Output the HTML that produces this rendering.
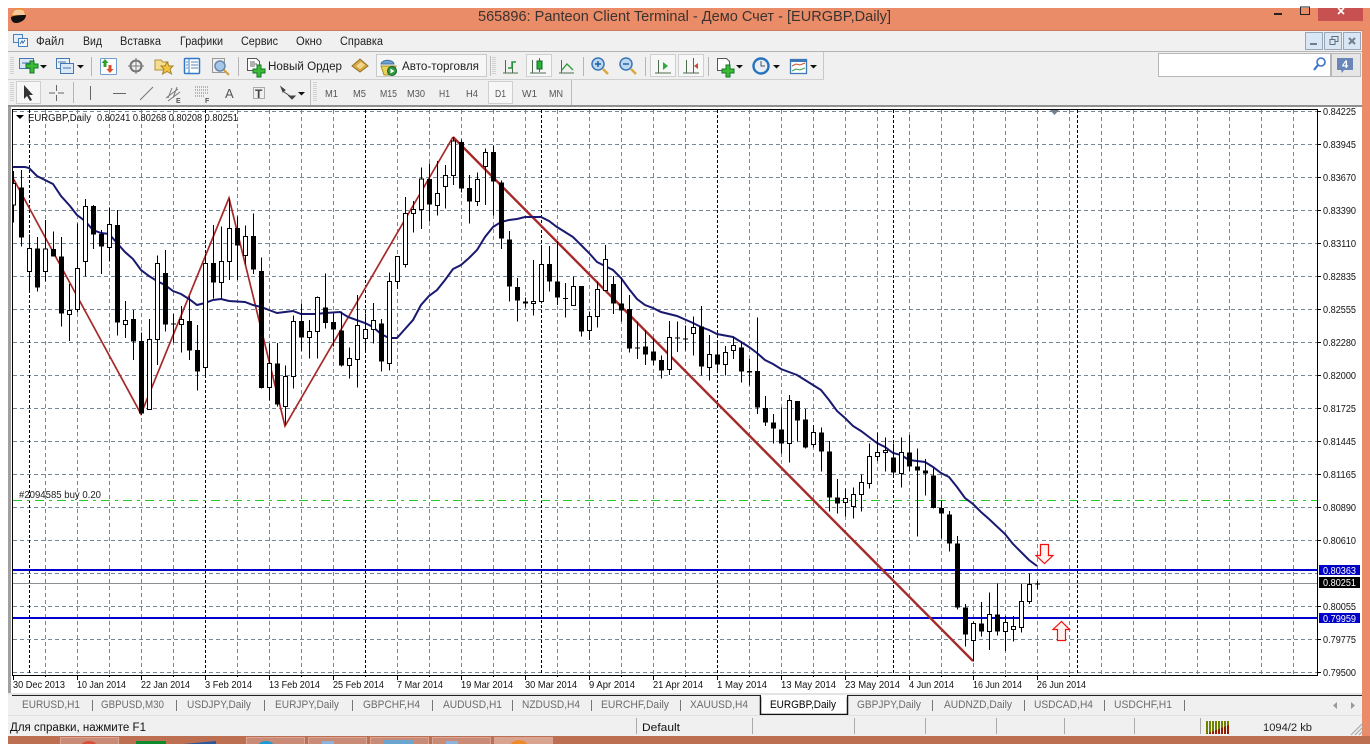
<!DOCTYPE html>
<html><head><meta charset="utf-8"><title>Panteon Client Terminal</title>
<style>
html,body{margin:0;padding:0;background:#fff;width:1370px;height:744px;overflow:hidden}
svg{display:block;font-family:"Liberation Sans","Noto Sans CJK SC",sans-serif}
.m{font-size:11.5px;fill:#222}
.t{font-size:10px;fill:#555}
.p{font-size:10px;fill:#111}
.d{font-size:10px;fill:#111}
.b{font-size:11px;fill:#6c6c6c}
</style></head><body>
<svg width="1370" height="744" viewBox="0 0 1370 744" xmlns="http://www.w3.org/2000/svg">
<defs><clipPath id="cl"><rect x="13" y="110" width="1304" height="565"/></clipPath></defs>
<rect x="8" y="8" width="1362" height="736" fill="#ea8c67"/>
<rect x="8" y="30" width="1355" height="1" fill="#c97a5c"/>
<rect x="8" y="31" width="1354" height="705" fill="#f0f0f0"/>
<!-- title -->
<path d="M11 18c0-7 5-10 8-10s7 2 7 7z" fill="#ef8a2a"/><path d="M14 11c2-2 7-2 10 0l1 4H12z" fill="#f4c9a0"/><path d="M11 17c4-2 11-2 15-2 0 5-6 8-10 8-3 0-5-2-5-6z" fill="#111"/>
<text x="478" y="21" font-size="15" fill="#3b3330" textLength="413" lengthAdjust="spacingAndGlyphs">565896: Panteon Client Terminal - Демо Счет - [EURGBP,Daily]</text>
<rect x="1274" y="13" width="8" height="2" fill="#222"/>
<rect x="1300.5" y="7" width="9" height="7.5" fill="none" stroke="#222"/>
<rect x="1318" y="8" width="45" height="13" fill="#c75050"/>
<path d="M1338 8l3 3 3-3M1338 14l3-3 3 3" stroke="#fff" stroke-width="1.6" fill="none"/>
<!-- menu -->
<rect x="13.5" y="34.5" width="9" height="8" fill="#e4eefa" stroke="#4a7fc0"/><rect x="18.5" y="38.5" width="9" height="8" fill="#f4f8fd" stroke="#4a7fc0"/><path d="M20 44l2-3 1 2 2-3" stroke="#3a6db0" fill="none"/>
<text class="m" x="36" y="45" textLength="28" lengthAdjust="spacingAndGlyphs">Файл</text>
<text class="m" x="83" y="45" textLength="19" lengthAdjust="spacingAndGlyphs">Вид</text>
<text class="m" x="120" y="45" textLength="41" lengthAdjust="spacingAndGlyphs">Вставка</text>
<text class="m" x="180" y="45" textLength="43" lengthAdjust="spacingAndGlyphs">Графики</text>
<text class="m" x="241" y="45" textLength="37" lengthAdjust="spacingAndGlyphs">Сервис</text>
<text class="m" x="296" y="45" textLength="26" lengthAdjust="spacingAndGlyphs">Окно</text>
<text class="m" x="340" y="45" textLength="43" lengthAdjust="spacingAndGlyphs">Справка</text>
<g fill="#d9e6f3" stroke="#96a6b6"><rect x="1305.5" y="32.5" width="17" height="17"/><rect x="1324.5" y="32.5" width="17" height="17"/><rect x="1343.5" y="32.5" width="17" height="17"/></g>
<rect x="1310" y="43" width="7" height="2" fill="#6f7d8c"/>
<path d="M1330 39.500h5v5h-5zM1332 39v-2.500h6v5h-3" fill="none" stroke="#5f6d7c"/>
<path d="M1349 38l6 6M1355 38l-6 6" stroke="#6f7d8c" stroke-width="2"/>
<rect x="8" y="51" width="1354" height="1" fill="#b4b4b4"/>
<!-- toolbar 1 -->
<path d="M823.500 52v27" stroke="#c8c8c8"/><rect x="8" y="79" width="816" height="1" fill="#cfcfcf"/>
<path d="M11 57v18M13 57v18" stroke="#b5b5b5" stroke-dasharray="1 1"/>
<g stroke-width="1">
<rect x="19.500" y="58.500" width="14" height="10" fill="#dbe8f6" stroke="#4677b0"/><path d="M22 63h8" stroke="#4677b0"/>
<path d="M27 63h4v-3h4v3h4v4h-4v5h-4v-5h-4z" transform="translate(-1 1)" fill="#3cbb35" stroke="#14762c"/>
<path d="M40 65h7l-3.500 3.500z" fill="#111"/>
<rect x="56.500" y="58.500" width="13" height="10" fill="#eaf2fb" stroke="#4677b0"/><rect x="60.500" y="63.500" width="13" height="10" fill="#dbe8f6" stroke="#4677b0"/><path d="M63 68h8M58 62h8" stroke="#4677b0"/>
<path d="M77 65h7l-3.500 3.500z" fill="#111"/>
<path d="M91.500 57v19" stroke="#b5b5b5"/>
<rect x="100.500" y="58.500" width="16" height="16" rx="1" fill="#fff" stroke="#6d9ccf"/><path d="M105 59l3.500 4h-2v4h-3v-4h-2z" fill="#30a030"/><path d="M110 73l-3.500-4h2v-4h3v4h2z" fill="#dd4a2a"/>
<circle cx="136" cy="66" r="5.500" fill="none" stroke="#777" stroke-width="2"/><path d="M136 58v16M128 66h16" stroke="#777"/>
<path d="M155 60h6l2 2h5v8h-13z" fill="#f5dd8d" stroke="#b08f3a"/><path d="M167 62l2 4h4l-3 3 1.500 5-4.500-2.500-4.500 2.500 1.500-5-3-3h4z" fill="#f2c63a" stroke="#a5812a"/>
<rect x="184.500" y="58.500" width="15" height="15" rx="1" fill="#fff" stroke="#2d78c8" stroke-width="1.500"/><path d="M189 59v14" stroke="#2d78c8"/><path d="M191 62h7M191 65h7M191 68h7M186 62h2M186 65h2M186 68h2" stroke="#5d85b5"/>
<rect x="212.500" y="58.500" width="12" height="14" fill="#eee" stroke="#999"/><circle cx="220" cy="66" r="5" fill="#a5c8ea" stroke="#6a88a8" stroke-width="1.500"/><path d="M224 70l5 5" stroke="#d5a03a" stroke-width="2"/>
<path d="M238.500 57v19" stroke="#b5b5b5"/>
<path d="M247.500 58.500h9l3 3v9h-12z" fill="#fff" stroke="#555"/><path d="M250 62h5M250 64h7M250 66h5" stroke="#666"/>
<path d="M253 69h4v-4h4v4h4v4h-4v4h-4v-4h-4z" fill="#3cbb35" stroke="#14762c"/>
<path d="M352 66l8-7 8 7-8 6z" fill="#d8a83f" stroke="#92702a"/><path d="M356 66l5-4 4 3-5 4z" fill="#efd690"/>
<rect x="376.500" y="54.500" width="110" height="22" fill="#f6f6f6" stroke="#c9c9c9"/>
<path d="M381 64c1-5 12-5 13 0z" fill="#6ea1d6" stroke="#46729f"/><path d="M381 66h15l-3 9h-9z" fill="#e9d15a" stroke="#a59026"/><circle cx="392" cy="71" r="4.500" fill="#2d9a3c" stroke="#14622a"/><path d="M390.500 68.500l4 2.500-4 2.500z" fill="#fff"/>
<rect x="490" y="56" width="1" height="20" fill="#bdbdbd"/>
<path d="M493 57v18M495 57v18" stroke="#b5b5b5" stroke-dasharray="1 1"/>
<path d="M505.500 60v13M503 73h15M512.500 63v10" stroke="#4c6b4e" fill="none"/><path d="M508 68h4v-6h4" stroke="#1e9a35" fill="none" stroke-width="1.500"/>
<rect x="526.500" y="54.500" width="25" height="22" fill="#f7f7f7" stroke="#cfcfcf"/><path d="M532.500 60v13M530 73h16M539.500 58v14" stroke="#4c6b4e" fill="none"/><rect x="537" y="61" width="5" height="8" fill="#25b33a" stroke="#0f6a24"/>
<path d="M561.500 60v13M559 73h15" stroke="#4c6b4e" fill="none"/><path d="M562 70l5-6 6 6" stroke="#2a9a3a" fill="none" stroke-width="1.300"/>
<path d="M583.500 57v19" stroke="#b5b5b5"/>
<circle cx="598" cy="64" r="6" fill="#bcd7f2" stroke="#3d75b5" stroke-width="1.500"/><path d="M595 64h6M598 61v6" stroke="#1f5aa0" stroke-width="1.400"/><path d="M603 69l5 5" stroke="#d9a83c" stroke-width="2.400"/>
<circle cx="626" cy="64" r="6" fill="#bcd7f2" stroke="#3d75b5" stroke-width="1.500"/><path d="M623 64h6" stroke="#1f5aa0" stroke-width="1.400"/><path d="M631 69l5 5" stroke="#d9a83c" stroke-width="2.400"/>
<path d="M645.500 57v19" stroke="#b5b5b5"/>
<rect x="650.500" y="54.500" width="25" height="22" fill="#f7f7f7" stroke="#cfcfcf"/><path d="M658.500 60v13M655 73h16" stroke="#4c6b4e" fill="none"/><path d="M663 62l5 4-5 4z" fill="#2ab03a"/>
<rect x="678.500" y="54.500" width="25" height="22" fill="#f7f7f7" stroke="#cfcfcf"/><path d="M686.500 60v13M683 73h16M693.500 58v15" stroke="#4c6b4e" fill="none"/><path d="M694 66l4-3v6z" fill="#c84a2a"/>
<path d="M708.500 57v19" stroke="#b5b5b5"/>
<path d="M717.500 58.500h9l3 3v9h-12z" fill="#fff" stroke="#555"/>
<path d="M722 69h4v-4h4v4h4v4h-4v4h-4v-4h-4z" fill="#3cbb35" stroke="#14762c"/>
<path d="M736 65h7l-3.500 3.500z" fill="#111"/>
<circle cx="761" cy="66" r="7.500" fill="#e8eef5" stroke="#2572bd" stroke-width="2.400"/><path d="M761 61v5h4" stroke="#555" fill="none"/>
<path d="M773 65h7l-3.500 3.500z" fill="#111"/>
<rect x="790.500" y="59.500" width="16" height="14" fill="#fff" stroke="#3f78b8" stroke-width="1.300"/><rect x="791" y="60" width="15" height="2" fill="#3f78b8"/><path d="M792 66l4-2 4 1 5-2" stroke="#c0552a" fill="none"/><path d="M792 71l4-2 4 1 5-2" stroke="#3aa04a" fill="none"/>
<path d="M810 65h7l-3.500 3.500z" fill="#111"/>
</g>
<text x="268" y="70" font-size="11.500" fill="#222" textLength="74" lengthAdjust="spacingAndGlyphs">Новый Ордер</text>
<text x="402" y="70" font-size="11.500" fill="#222" textLength="77" lengthAdjust="spacingAndGlyphs">Авто-торговля</text>
<!-- search -->
<rect x="1158.500" y="53.500" width="172" height="23" fill="#fff" stroke="#b7b7b7"/>
<circle cx="1321" cy="62" r="4" fill="#fff" stroke="#3c72c8" stroke-width="1.600"/><path d="M1318 65l-4 5" stroke="#3c72c8" stroke-width="2.200"/>
<rect x="1331.500" y="53.500" width="29" height="23" fill="#e6e6e6" stroke="#b7b7b7"/>
<path d="M1337 58h16v12h-9l-2 3-1-3h-4z" fill="#6a85b8"/><text x="1342" y="68" font-size="11" font-weight="bold" fill="#fff">4</text>
<!-- toolbar 2 -->
<path d="M11 82v19M13 82v19" stroke="#b5b5b5" stroke-dasharray="1 1"/>
<rect x="16.500" y="81.500" width="24" height="22" fill="#f7f7f7" stroke="#cfcfcf"/>
<path d="M24 85v14l3-3 3 5 2-1-3-5h4z" fill="#333"/>
<path d="M49 93h6M58 93h6M56.500 85v6M56.500 95v6" stroke="#666"/>
<path d="M73.500 82v21" stroke="#b5b5b5"/>
<path d="M90.500 86v14" stroke="#666"/><path d="M113 93.500h13" stroke="#666"/><path d="M140 100l13-13" stroke="#777"/>
<path d="M166 98l12-9M168 101l12-9M172 88l-4 10M177 87l-4 11" stroke="#777" fill="none"/><text x="176" y="103" font-size="7" font-weight="bold" fill="#555">E</text>
<path d="M195 87h13M195 90h13M195 93h13M195 96h10" stroke="#777" stroke-dasharray="1 1"/><text x="205" y="103" font-size="7" font-weight="bold" fill="#555">F</text>
<text x="225" y="98" font-size="13" fill="#555">A</text>
<rect x="253.500" y="87.500" width="11" height="11" fill="none" stroke="#666" stroke-dasharray="1 1"/><text x="255" y="98" font-size="12" font-weight="bold" fill="#444">T</text>
<path d="M281 87l4 3-2 2zM289 96h6l-3 3zM284 92l6 4" fill="#444" stroke="#444"/>
<path d="M298 92h7l-3.500 3.500z" fill="#111"/>
<path d="M310.500 80v25" stroke="#bdbdbd"/><path d="M314 82v19M316 82v19" stroke="#b5b5b5" stroke-dasharray="1 1"/>
<text class="t" x="325" y="97" textLength="13" lengthAdjust="spacingAndGlyphs">M1</text>
<text class="t" x="353" y="97" textLength="13" lengthAdjust="spacingAndGlyphs">M5</text>
<text class="t" x="380" y="97" textLength="17" lengthAdjust="spacingAndGlyphs">M15</text>
<text class="t" x="407" y="97" textLength="18" lengthAdjust="spacingAndGlyphs">M30</text>
<text class="t" x="439" y="97" textLength="11" lengthAdjust="spacingAndGlyphs">H1</text>
<text class="t" x="466" y="97" textLength="12" lengthAdjust="spacingAndGlyphs">H4</text>
<rect x="488.500" y="81.500" width="24" height="22" fill="#f7f7f7" stroke="#cfcfcf"/>
<text class="t" x="495" y="97" textLength="11" lengthAdjust="spacingAndGlyphs">D1</text>
<text class="t" x="522" y="97" textLength="15" lengthAdjust="spacingAndGlyphs">W1</text>
<text class="t" x="549" y="97" textLength="14" lengthAdjust="spacingAndGlyphs">MN</text>
<path d="M571.500 80v25" stroke="#bdbdbd"/>
<rect x="8" y="105" width="1354" height="2" fill="#8f8f8f"/>
<!-- chart window -->
<rect x="8" y="107" width="3" height="586" fill="#a0a0a0"/>
<rect x="11" y="107" width="1351" height="586" fill="#fff"/>
<g shape-rendering="crispEdges">
<g clip-path="url(#cl)">
<path fill="none" stroke="#778899" stroke-dasharray="4 3" d="M13 111.500H1317M13 144.500H1317M13 177.500H1317M13 210.500H1317M13 243.500H1317M13 276.500H1317M13 309.500H1317M13 342.500H1317M13 375.500H1317M13 408.500H1317M13 441.500H1317M13 474.500H1317M13 507.500H1317M13 540.500H1317M13 573.500H1317M13 606.500H1317M13 639.500H1317M13 672.500H1317M45.500 110V675M77.500 110V675M109.500 110V675M141.500 110V675M173.500 110V675M237.500 110V675M269.500 110V675M301.500 110V675M333.500 110V675M397.500 110V675M429.500 110V675M461.500 110V675M493.500 110V675M525.500 110V675M557.500 110V675M589.500 110V675M621.500 110V675M653.500 110V675M685.500 110V675M749.500 110V675M781.500 110V675M813.500 110V675M845.500 110V675M877.500 110V675M909.500 110V675M941.500 110V675M973.500 110V675M1005.500 110V675M1037.500 110V675M1069.500 110V675M1101.500 110V675M1133.500 110V675M1165.500 110V675M1197.500 110V675M1229.500 110V675M1261.500 110V675M1293.500 110V675"/>
<path fill="none" stroke="#000" stroke-dasharray="3 2" d="M29.500 110V675M205.500 110V675M365.500 110V675M541.500 110V675M717.500 110V675M893.500 110V675M1077.500 110V675"/>
<path d="M13 500.500H1317" stroke="#22cc22" stroke-dasharray="9 5 3 5" fill="none"/>
<path d="M13 583.500H1317" stroke="#8a8f94" fill="none"/>
<rect x="13" y="569" width="1304" height="2" fill="#0000c8"/>
<rect x="13" y="617" width="1304" height="2" fill="#0000c8"/>
</g>
</g>
<g clip-path="url(#cl)">
<polyline fill="none" stroke="#a52a2a" stroke-width="1.700" points="13,178 141,414 229,198 285,426 453,137"/>
<polyline fill="none" stroke="#a52a2a" stroke-width="2.400" points="453,137 973,661"/>
<polyline fill="none" stroke="#191970" stroke-width="2" points="13,167 25,167 29,168 37,176 53,184 61,196 70,206 77,215 85,221 93,230 101,233 109,234 117,243 125,252 133,259 141,270 149,276 157,281 165,285 173,291 181,294 189,299 197,305 205,303 213,300 221,299 229,301 245,302 253,305 261,307 269,310 277,313 285,312 293,311 301,314 317,314 325,313 340,312 348,317 365,323 373,327 381,334 389,338 397,338 405,329 413,320 421,305 429,296 437,290 445,280 453,269 461,265 469,258 477,250 485,237 493,227 501,222 509,220 517,219 525,217 541,217 549,221 557,227 565,232 573,237 581,245 589,253 597,262 605,266 613,270 621,278 629,289 637,299 645,305 653,308 661,312 677,316 693,323 701,327 709,330 717,334 733,337 741,342 749,347 757,353 765,360 773,364 781,369 789,372 797,375 805,380 813,385 821,390 829,400 837,411 845,418 853,426 861,431 869,437 877,443 885,447 893,453 901,455 909,460 925,462 933,467 941,473 949,477 957,487 965,498 973,504 981,512 989,519 1005,534 1013,544 1021,552 1029,560 1037,566"/>
<g shape-rendering="crispEdges">
<g transform="translate(0 105) scale(1 .33333)">
<path fill="none" stroke="#000" vector-effect="non-scaling-stroke" d="M13.500 198V352M21.500 195V425M29.500 388V563M37.500 396V560M45.500 345V530M53.500 380V455M61.500 396V665M69.500 537V708M77.500 355V623M85.500 282V515M93.500 300V432M101.500 375V507M109.500 308V470M117.500 315V692M125.500 588V699M133.500 615V765M141.500 683V930M149.500 642V913M157.500 452V780M165.500 435V680M173.500 627V712M181.500 603V743M189.500 575V765M197.500 660V857M205.500 445V813M213.500 360V580M221.500 365V580M229.500 280V525M237.500 335V525M245.500 362V478M253.500 325V507M261.500 457V851M269.500 715V887M277.500 714V905M285.500 782V960M293.500 632V850M301.500 595V738M309.500 645V760M317.500 574V760M325.500 505V670M333.500 625V725"/>
<path fill="#000" d="M19 247h5V397h-5zM35 430h5V548h-5zM51 432h5V455h-5zM59 454h5V626h-5zM91 303h5V389h-5zM99 387h5V425h-5zM115 360h5V653h-5zM131 642h5V710h-5zM139 708h5V925h-5zM163 504h5V659h-5zM171 655h5V659h-5zM187 648h5V737h-5zM195 735h5V800h-5zM211 474h5V533h-5zM235 369h5V421h-5zM251 393h5V494h-5zM259 498h5V849h-5zM275 775h5V899h-5zM299 648h5V698h-5zM323 607h5V654h-5zM331 651h5V674h-5z"/>
<path fill="#fff" stroke="#000" vector-effect="non-scaling-stroke" d="M11.500 235h4V300h-4zM27.500 430h4V499h-4zM43.500 432h4V499h-4zM67.500 616h4V628h-4zM75.500 490h4V613h-4zM83.500 304h4V469h-4zM107.500 358h4V427h-4zM123.500 646h4V659h-4zM147.500 703h4V913h-4zM155.500 475h4V703h-4zM179.500 643h4V658h-4zM203.500 475h4V787h-4zM219.500 469h4V532h-4zM227.500 370h4V469h-4zM243.500 394h4V451h-4zM267.500 775h4V847h-4zM283.500 814h4V904h-4zM291.500 649h4V814h-4zM307.500 679h4V697h-4zM315.500 577h4V679h-4z"/>
<path fill="none" stroke="#000" vector-effect="non-scaling-stroke" d="M341.500 620V785M349.500 728V820M357.500 570V848M365.500 625V740M373.500 594V716M381.500 642V800M389.500 502V797M397.500 454V552M405.500 276V488M413.500 288V383M421.500 188V372M429.500 176V350M437.500 168V332M445.500 180V311M453.500 96V240M461.500 103V263M469.500 210V356M477.500 202V303M485.500 130V300M493.500 122V332M501.500 226V432M509.500 378V590M517.500 519V650M525.500 578V607M533.500 465V632M541.500 427V595M549.500 423V560M557.500 408V600M565.500 534V638M573.500 515V603M581.500 543V695M589.500 620V705M597.500 530V668M605.500 420V558M613.500 513V627M621.500 517V650M629.500 570V743M637.500 650V762M645.500 675V780M653.500 700V780"/>
<path fill="#000" d="M339 676h5V782h-5zM379 655h5V770h-5zM427 222h5V299h-5zM459 111h5V251h-5zM467 249h5V290h-5zM491 141h5V230h-5zM499 232h5V401h-5zM507 403h5V545h-5zM515 546h5V587h-5zM523 589h5V596h-5zM547 477h5V530h-5zM555 529h5V578h-5zM563 579h5V582h-5zM579 543h5V680h-5zM611 537h5V596h-5zM619 595h5V617h-5zM627 612h5V731h-5zM635 727h5V731h-5zM643 724h5V749h-5zM651 739h5V767h-5z"/>
<path fill="#fff" stroke="#000" vector-effect="non-scaling-stroke" d="M347.500 760h4V781h-4zM355.500 661h4V763h-4zM363.500 673h4V700h-4zM371.500 646h4V673h-4zM387.500 529h4V775h-4zM395.500 454h4V529h-4zM403.500 325h4V479h-4zM411.500 314h4V325h-4zM419.500 222h4V313h-4zM435.500 265h4V301h-4zM443.500 211h4V244h-4zM451.500 108h4V212h-4zM475.500 223h4V289h-4zM483.500 142h4V185h-4zM531.500 589h4V595h-4zM539.500 478h4V590h-4zM571.500 544h4V601h-4zM587.500 634h4V676h-4zM595.500 553h4V634h-4zM603.500 463h4V556h-4z"/>
</g>
<g transform="translate(0 290) scale(1 .33333)">
<path fill="none" stroke="#000" vector-effect="non-scaling-stroke" d="M661.500 197V266M669.500 93V255M677.500 95V186M685.500 107V181M693.500 80V197M701.500 48V257M709.500 135V272M717.500 157V248M725.500 168V257M733.500 143V207M741.500 155V278M749.500 207V287M757.500 82V372M765.500 318V408M773.500 372V461M781.500 352V491M789.500 315V518M797.500 333V455M805.500 357V475M813.500 405V472M821.500 412V545M829.500 453V665M837.500 567V670M845.500 595V680M853.500 593V686M861.500 553V665M869.500 460V596M877.500 427V513M885.500 442V545M893.500 460V562M901.500 442V593M909.500 435V545M917.500 475V740M925.500 507V617M933.500 535V655M941.500 632V745"/>
<path fill="#000" d="M659 210h5V242h-5zM675 142h5V146h-5zM683 145h5V149h-5zM699 110h5V230h-5zM715 193h5V224h-5zM739 172h5V245h-5zM747 243h5V247h-5zM755 243h5V353h-5zM763 354h5V398h-5zM771 397h5V416h-5zM779 418h5V461h-5zM795 333h5V392h-5zM803 388h5V473h-5zM819 427h5V485h-5zM827 484h5V622h-5zM835 622h5V640h-5zM891 502h5V548h-5zM907 488h5V530h-5zM915 529h5V542h-5zM923 541h5V551h-5zM931 556h5V654h-5zM939 654h5V671h-5z"/>
<path fill="#fff" stroke="#000" vector-effect="non-scaling-stroke" d="M667.500 142h4V238h-4zM691.500 112h4V131h-4zM707.500 193h4V233h-4zM723.500 187h4V224h-4zM731.500 166h4V181h-4zM787.500 331h4V460h-4zM811.500 427h4V463h-4zM843.500 625h4V637h-4zM851.500 614h4V649h-4zM859.500 577h4V613h-4zM867.500 499h4V580h-4zM875.500 488h4V499h-4zM883.500 482h4V487h-4zM899.500 488h4V550h-4z"/>
</g>
<g transform="translate(0 480) scale(1 .33333)">
<path fill="none" stroke="#000" vector-effect="non-scaling-stroke" d="M949.500 93V215M957.500 168V388M965.500 372V500M973.500 425V545M981.500 366V470M989.500 337V510M997.500 310V466M1005.500 408V513M1013.500 408V485M1021.500 312V458M1029.500 280V372M1037.500 303V328"/>
<path fill="#000" d="M947 103h5V190h-5zM955 190h5V383h-5zM963 382h5V464h-5zM979 430h5V455h-5zM995 403h5V455h-5zM1035 310h5V313h-5z"/>
<path fill="#fff" stroke="#000" vector-effect="non-scaling-stroke" d="M971.500 430h4V481h-4zM987.500 404h4V454h-4zM1003.500 428h4V454h-4zM1011.500 440h4V448h-4zM1019.500 365h4V442h-4zM1027.500 313h4V364h-4z"/>
</g>
</g>
</g>
<!-- arrows -->
<path d="M1040.500 544.500h8v11h4.500l-8.500 8-8.500-8h4.500z" fill="#fff4f0" stroke="#f01010" stroke-width="1.200"/>
<path d="M1057.500 640.500h8v-11h4l-8-8-8.500 8h4.500z" fill="#fff4f0" stroke="#f01010" stroke-width="1.200"/>
<path d="M1050 110h9l-4.500 5z" fill="#6f7f8f"/>
<!-- frame -->
<g shape-rendering="crispEdges" fill="none" stroke="#000">
<path d="M12.500 109.500H1317.500V675.500H12.500Z"/>
<path d="M1317 111.500h4M1317 144.500h4M1317 177.500h4M1317 210.500h4M1317 243.500h4M1317 276.500h4M1317 309.500h4M1317 342.500h4M1317 375.500h4M1317 408.500h4M1317 441.500h4M1317 474.500h4M1317 507.500h4M1317 540.500h4M1317 606.500h4M1317 639.500h4M1317 672.500h4"/>
<path d="M13.500 675v5M77.500 675v5M141.500 675v5M205.500 675v5M269.500 675v5M333.500 675v5M397.500 675v5M461.500 675v5M525.500 675v5M589.500 675v5M653.500 675v5M717.500 675v5M781.500 675v5M845.500 675v5M909.500 675v5M973.500 675v5M1037.500 675v5"/>
<path d="M45.500 675v2M109.500 675v2M173.500 675v2M237.500 675v2M301.500 675v2M365.500 675v2M429.500 675v2M493.500 675v2M557.500 675v2M621.500 675v2M685.500 675v2M749.500 675v2M813.500 675v2M877.500 675v2M941.500 675v2M1005.500 675v2M1069.500 675v2"/>
</g>
<!-- header -->
<path d="M16 115h8l-4 4z" fill="#000"/>
<text x="28" y="121" font-size="10" fill="#111" textLength="63" lengthAdjust="spacingAndGlyphs">EURGBP,Daily</text>
<text x="97" y="121" font-size="10" fill="#111" textLength="141" lengthAdjust="spacingAndGlyphs">0.80241 0.80268 0.80208 0.80251</text>
<text x="19" y="498" font-size="10" fill="#222" textLength="82" lengthAdjust="spacingAndGlyphs">#2094585 buy 0.20</text>
<!-- prices -->
<g class="p">
<text class="p" x="1323" y="115" textLength="33" lengthAdjust="spacingAndGlyphs">0.84225</text>
<text class="p" x="1323" y="148" textLength="33" lengthAdjust="spacingAndGlyphs">0.83945</text>
<text class="p" x="1323" y="181" textLength="33" lengthAdjust="spacingAndGlyphs">0.83670</text>
<text class="p" x="1323" y="214" textLength="33" lengthAdjust="spacingAndGlyphs">0.83390</text>
<text class="p" x="1323" y="247" textLength="33" lengthAdjust="spacingAndGlyphs">0.83110</text>
<text class="p" x="1323" y="280" textLength="33" lengthAdjust="spacingAndGlyphs">0.82835</text>
<text class="p" x="1323" y="313" textLength="33" lengthAdjust="spacingAndGlyphs">0.82555</text>
<text class="p" x="1323" y="346" textLength="33" lengthAdjust="spacingAndGlyphs">0.82280</text>
<text class="p" x="1323" y="379" textLength="33" lengthAdjust="spacingAndGlyphs">0.82000</text>
<text class="p" x="1323" y="412" textLength="33" lengthAdjust="spacingAndGlyphs">0.81725</text>
<text class="p" x="1323" y="445" textLength="33" lengthAdjust="spacingAndGlyphs">0.81445</text>
<text class="p" x="1323" y="478" textLength="33" lengthAdjust="spacingAndGlyphs">0.81165</text>
<text class="p" x="1323" y="511" textLength="33" lengthAdjust="spacingAndGlyphs">0.80890</text>
<text class="p" x="1323" y="544" textLength="33" lengthAdjust="spacingAndGlyphs">0.80610</text>
<text class="p" x="1323" y="610" textLength="33" lengthAdjust="spacingAndGlyphs">0.80055</text>
<text class="p" x="1323" y="643" textLength="33" lengthAdjust="spacingAndGlyphs">0.79775</text>
<text class="p" x="1323" y="676" textLength="33" lengthAdjust="spacingAndGlyphs">0.79500</text>
</g>
<rect x="1319" y="565" width="41" height="10" fill="#0000c8"/>
<rect x="1319" y="577" width="41" height="11" fill="#000"/>
<rect x="1319" y="613" width="41" height="10" fill="#0000c8"/>
<text x="1323" y="574" font-size="10" fill="#fff" textLength="33" lengthAdjust="spacingAndGlyphs">0.80363</text>
<text x="1323" y="586" font-size="10" fill="#fff" textLength="33" lengthAdjust="spacingAndGlyphs">0.80251</text>
<text x="1323" y="622" font-size="10" fill="#fff" textLength="33" lengthAdjust="spacingAndGlyphs">0.79959</text>
<!-- dates -->
<text class="d" x="13" y="688" textLength="52" lengthAdjust="spacingAndGlyphs">30 Dec 2013</text>
<text class="d" x="77" y="688" textLength="49" lengthAdjust="spacingAndGlyphs">10 Jan 2014</text>
<text class="d" x="141" y="688" textLength="49" lengthAdjust="spacingAndGlyphs">22 Jan 2014</text>
<text class="d" x="205" y="688" textLength="47" lengthAdjust="spacingAndGlyphs">3 Feb 2014</text>
<text class="d" x="269" y="688" textLength="51" lengthAdjust="spacingAndGlyphs">13 Feb 2014</text>
<text class="d" x="333" y="688" textLength="51" lengthAdjust="spacingAndGlyphs">25 Feb 2014</text>
<text class="d" x="397" y="688" textLength="46" lengthAdjust="spacingAndGlyphs">7 Mar 2014</text>
<text class="d" x="461" y="688" textLength="52" lengthAdjust="spacingAndGlyphs">19 Mar 2014</text>
<text class="d" x="525" y="688" textLength="52" lengthAdjust="spacingAndGlyphs">30 Mar 2014</text>
<text class="d" x="589" y="688" textLength="46" lengthAdjust="spacingAndGlyphs">9 Apr 2014</text>
<text class="d" x="653" y="688" textLength="50" lengthAdjust="spacingAndGlyphs">21 Apr 2014</text>
<text class="d" x="717" y="688" textLength="50" lengthAdjust="spacingAndGlyphs">1 May 2014</text>
<text class="d" x="781" y="688" textLength="55" lengthAdjust="spacingAndGlyphs">13 May 2014</text>
<text class="d" x="845" y="688" textLength="55" lengthAdjust="spacingAndGlyphs">23 May 2014</text>
<text class="d" x="909" y="688" textLength="45" lengthAdjust="spacingAndGlyphs">4 Jun 2014</text>
<text class="d" x="973" y="688" textLength="49" lengthAdjust="spacingAndGlyphs">16 Jun 2014</text>
<text class="d" x="1037" y="688" textLength="49" lengthAdjust="spacingAndGlyphs">26 Jun 2014</text>
<!-- tabs -->
<rect x="8" y="693" width="1354" height="2" fill="#e4e4e4"/>
<rect x="12" y="695" width="1350" height="1" fill="#222"/>
<path d="M92.500 700v11M176.500 700v11M264.500 700v11M352.500 700v11M432.500 700v11M512.500 700v11M591.500 700v11M680.500 700v11M932.500 700v11M1024.500 700v11M1104.500 700v11M1184.500 700v11" stroke="#777"/>
<path d="M760.500 695.500v19h87v-19" fill="#fff" stroke="#111" stroke-width="1.500"/><rect x="761" y="695" width="86" height="2" fill="#fff"/>
<text class="b" x="22" y="708" textLength="58" lengthAdjust="spacingAndGlyphs">EURUSD,H1</text>
<text class="b" x="101" y="708" textLength="63" lengthAdjust="spacingAndGlyphs">GBPUSD,M30</text>
<text class="b" x="187" y="708" textLength="64" lengthAdjust="spacingAndGlyphs">USDJPY,Daily</text>
<text class="b" x="275" y="708" textLength="64" lengthAdjust="spacingAndGlyphs">EURJPY,Daily</text>
<text class="b" x="363" y="708" textLength="57" lengthAdjust="spacingAndGlyphs">GBPCHF,H4</text>
<text class="b" x="443" y="708" textLength="59" lengthAdjust="spacingAndGlyphs">AUDUSD,H1</text>
<text class="b" x="522" y="708" textLength="58" lengthAdjust="spacingAndGlyphs">NZDUSD,H4</text>
<text class="b" x="601" y="708" textLength="68" lengthAdjust="spacingAndGlyphs">EURCHF,Daily</text>
<text class="b" x="690" y="708" textLength="58" lengthAdjust="spacingAndGlyphs">XAUUSD,H4</text>
<text x="770" y="708" font-size="11" fill="#000" textLength="66" lengthAdjust="spacingAndGlyphs">EURGBP,Daily</text>
<text class="b" x="857" y="708" textLength="64" lengthAdjust="spacingAndGlyphs">GBPJPY,Daily</text>
<text class="b" x="944" y="708" textLength="68" lengthAdjust="spacingAndGlyphs">AUDNZD,Daily</text>
<text class="b" x="1034" y="708" textLength="59" lengthAdjust="spacingAndGlyphs">USDCAD,H4</text>
<text class="b" x="1114" y="708" textLength="58" lengthAdjust="spacingAndGlyphs">USDCHF,H1</text>
<path d="M1337 702l-4 3.500 4 3.500zM1351 702l4 3.500-4 3.500z" fill="#999"/>
<!-- status -->
<rect x="8" y="715" width="1354" height="1" fill="#e2e2e2"/>
<text x="10" y="731" font-size="11.500" fill="#111" textLength="136" lengthAdjust="spacingAndGlyphs">Для справки, нажмите F1</text>
<text x="642" y="731" font-size="11" fill="#111" textLength="38" lengthAdjust="spacingAndGlyphs">Default</text>
<path d="M636.500 718v16M752.500 718v16M854.500 718v16M925.500 718v16M996.500 718v16M1064.500 718v16M1134.500 718v16M1200.500 718v16" stroke="#aaa"/>
<rect x="1206" y="721" width="23" height="13" fill="#6f8200"/>
<path d="M1206 734l23-9v9z" fill="#941a00"/>
<path d="M1208.500 721v13M1211.500 721v13M1214.500 721v13M1217.500 721v13M1220.500 721v13M1223.500 721v13M1226.500 721v13" stroke="#f0f0f0"/>
<text x="1263" y="731" font-size="11" fill="#222" textLength="49" lengthAdjust="spacingAndGlyphs">1094/2 kb</text>
<path d="M1351 735l12-12M1355 735l8-8M1359 735l4-4" stroke="#aaa" stroke-width="1.200"/>
<!-- taskbar -->
<rect x="8" y="736" width="1362" height="8" fill="#bd6f52"/>
<g fill="#c98b76" stroke="#d8a596">
<rect x="60.500" y="737.500" width="58" height="8"/>
<rect x="246.500" y="737.500" width="58" height="8"/>
<rect x="308.500" y="737.500" width="58" height="8"/>
<rect x="370.500" y="737.500" width="58" height="8"/>
<rect x="432.500" y="737.500" width="58" height="8"/>
<rect x="494.500" y="737.500" width="58" height="8" fill="#d8a48f"/>
</g>
<rect x="136" y="741" width="30" height="3" fill="#0f8a2f"/>
<path d="M183 744l33-3v3z" fill="#2a5a9a"/>
<path d="M82 744c2-4 12-4 14 0z" fill="#d8503a"/>
<path d="M259 744c2-4 12-4 14 0z" fill="#1c9bd8"/>
<rect x="322" y="741" width="12" height="3" fill="#8ab4de"/>
<rect x="383" y="740" width="30" height="4" fill="#6aa4d0"/>
<rect x="446" y="741" width="12" height="3" fill="#8ab4de"/>
<path d="M511 744c2-5 14-5 16 0z" fill="#ee8a2a"/>
</svg>
</body></html>
